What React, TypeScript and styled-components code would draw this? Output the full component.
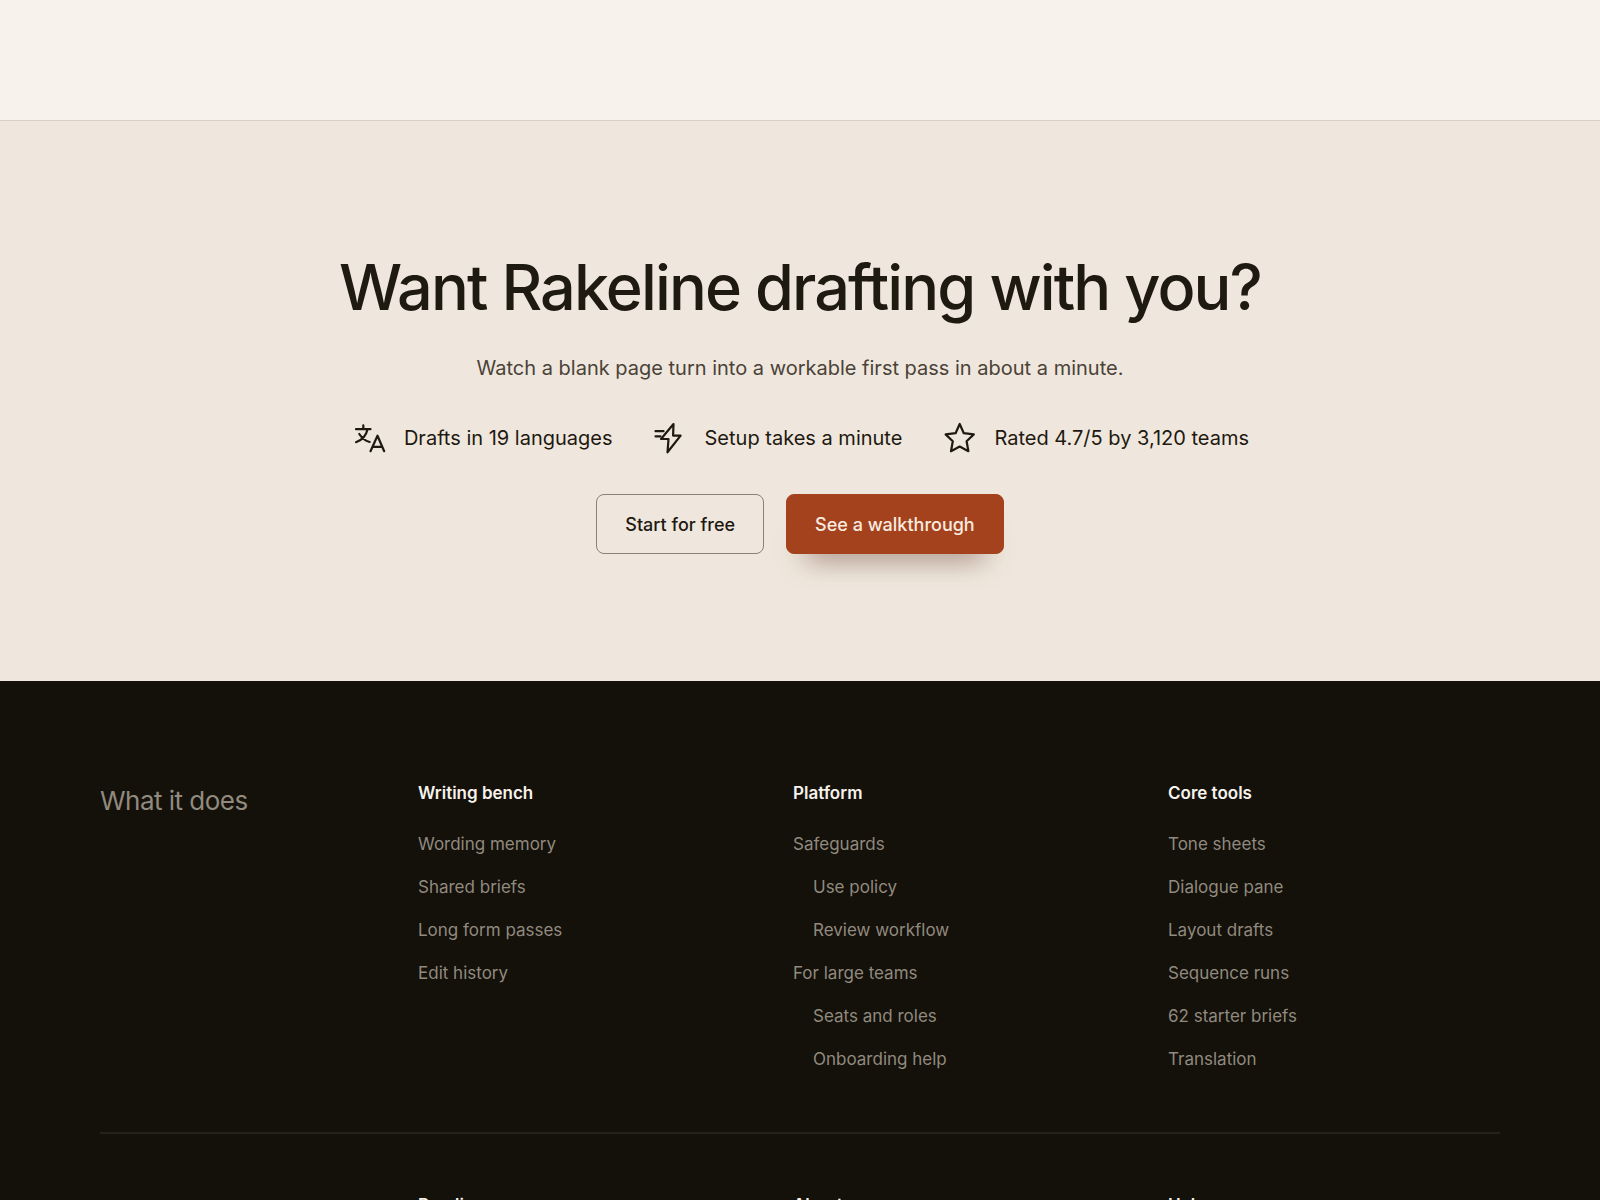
import React from "react";
import styled, { createGlobalStyle } from "styled-components";

const GlobalStyle = createGlobalStyle`
  *, *::before, *::after { box-sizing: border-box; }
  html { background: #14100a; }
  body {
    margin: 0;
    font-family: Inter, "Liberation Sans", sans-serif;
    color: #1e1911;
    -webkit-font-smoothing: antialiased;
  }
  h2, h3, p, ul { margin: 0; padding: 0; }
  ul { list-style: none; }
  a { color: inherit; text-decoration: none; }
`;

const Intro = styled.div`
  height: 121px;
  background: #f7f2eb;
  border-bottom: 1px solid #d8d1c3;
`;

const Callout = styled.section`
  display: flex;
  flex-direction: column;
  align-items: center;
  padding: 128px 24px 127px;
  background: #efe7dd;
  text-align: center;
`;

const Headline = styled.h2`
  font-size: 63px;
  line-height: 76px;
  font-weight: 500;
  letter-spacing: -0.03em;
`;

const Lead = styled.p`
  margin-top: 27px;
  font-size: 20px;
  line-height: 32px;
  color: #4a4237;
`;

const Perks = styled.ul`
  display: flex;
  flex-wrap: wrap;
  justify-content: center;
  gap: 16px 39px;
  margin-top: 36px;
`;

const Perk = styled.li`
  display: flex;
  align-items: center;
  gap: 17px;
  font-size: 20px;
  line-height: 32px;

  svg {
    width: 36px;
    height: 36px;
    flex: none;
  }
`;

const Actions = styled.div`
  display: flex;
  flex-wrap: wrap;
  justify-content: center;
  gap: 22px;
  margin-top: 38px;
`;

const Button = styled.button<{ $primary?: boolean }>`
  height: 60px;
  padding: 0 28px;
  border: 1px solid ${(p) => (p.$primary ? "#a4421d" : "#8a8177")};
  border-radius: 8px;
  background: ${(p) => (p.$primary ? "#a4421d" : "transparent")};
  color: ${(p) => (p.$primary ? "#f9ebe0" : "#1e1911")};
  box-shadow: ${(p) => (p.$primary ? "0 24px 28px -20px rgba(80, 32, 20, 0.55)" : "none")};
  font-family: inherit;
  font-size: 18px;
  font-weight: 500;
  cursor: pointer;
`;

const Footer = styled.footer`
  padding: 100px 100px 0;
  background: #14100a;
  color: #918a7e;
`;

const Group = styled.div`
  display: grid;
  grid-template-columns: 275px repeat(3, 1fr);
  column-gap: 43px;
  padding-bottom: 61px;

  & + & {
    padding-top: 59px;
    border-top: 2px solid #25211b;
  }
`;

const GroupTitle = styled.h2`
  font-size: 26px;
  line-height: 40px;
  font-weight: 400;
  letter-spacing: -0.02em;
`;

const ColumnTitle = styled.h3`
  font-size: 17px;
  line-height: 24px;
  font-weight: 600;
  color: #f7f2eb;
`;

const Links = styled.ul`
  display: grid;
  gap: 19px;
  margin-top: 27px;
  font-size: 17px;
  line-height: 24px;
`;

const LinkItem = styled.li<{ $nested?: boolean }>`
  padding-left: ${(p) => (p.$nested ? 20 : 0)}px;
`;

function TranslateIcon() {
  return (
    <svg viewBox="0 0 36 36" fill="none" stroke="currentColor" strokeWidth="2.2" strokeLinecap="round" strokeLinejoin="round" aria-hidden="true">
      <path d="M5 9.200h14.500M12.300 5.300v3.900M16.500 9.200c-1.200 6-5.500 10.800-11.500 13M8.300 14c2.300 3.800 5.800 6.700 10.400 8" />
      <path d="M19.500 31.200l7-15.500 6.700 15.500M21.700 26.800h9.300" />
    </svg>
  );
}

function BoltIcon() {
  return (
    <svg viewBox="0 0 36 36" fill="none" stroke="currentColor" strokeWidth="2.2" strokeLinecap="round" strokeLinejoin="round" aria-hidden="true">
      <path d="M21.500 4 9 19h7.500L15.500 32.300 28.600 15.600h-7.500z" />
      <path d="M3.500 11.200h8M3.500 16.300h5" />
    </svg>
  );
}

function StarIcon() {
  return (
    <svg viewBox="0 0 36 36" fill="none" stroke="currentColor" strokeWidth="2.2" strokeLinecap="round" strokeLinejoin="round" aria-hidden="true">
      <path d="M18.700 4l4.100 9.200 10 1.200-7.200 6.900 1.800 9.900-8.700-4.700-8.700 4.700 1.800-9.900-7.200-6.900 10-1.200z" />
    </svg>
  );
}

type Entry = { label: string; nested?: boolean };
type ColumnData = { title: string; links: Entry[] };

const productColumns: ColumnData[] = [
  {
    title: "Writing bench",
    links: [{ label: "Wording memory" }, { label: "Shared briefs" }, { label: "Long form passes" }, { label: "Edit history" }],
  },
  {
    title: "Platform",
    links: [
      { label: "Safeguards" },
      { label: "Use policy", nested: true },
      { label: "Review workflow", nested: true },
      { label: "For large teams" },
      { label: "Seats and roles", nested: true },
      { label: "Onboarding help", nested: true },
    ],
  },
  {
    title: "Core tools",
    links: [
      { label: "Tone sheets" },
      { label: "Dialogue pane" },
      { label: "Layout drafts" },
      { label: "Sequence runs" },
      { label: "62 starter briefs" },
      { label: "Translation" },
    ],
  },
];

const companyColumns: ColumnData[] = [
  { title: "Reading", links: [] },
  { title: "About", links: [] },
  { title: "Help", links: [] },
];

function Column({ title, links }: ColumnData) {
  return (
    <div>
      <ColumnTitle>{title}</ColumnTitle>
      {links.length > 0 && (
        <Links>
          {links.map((link) => (
            <LinkItem key={link.label} $nested={link.nested}>
              <a href="#">{link.label}</a>
            </LinkItem>
          ))}
        </Links>
      )}
    </div>
  );
}

export default function App() {
  return (
    <>
      <GlobalStyle />
      <main>
        <Intro />
        <Callout>
          <Headline>Want Rakeline drafting with you?</Headline>
          <Lead>Watch a blank page turn into a workable first pass in about a minute.</Lead>
          <Perks>
            <Perk><TranslateIcon />Drafts in 19 languages</Perk>
            <Perk><BoltIcon />Setup takes a minute</Perk>
            <Perk><StarIcon />Rated 4.7/5 by 3,120 teams</Perk>
          </Perks>
          <Actions>
            <Button type="button">Start for free</Button>
            <Button type="button" $primary>See a walkthrough</Button>
          </Actions>
        </Callout>
      </main>
      <Footer>
        <Group>
          <GroupTitle>What it does</GroupTitle>
          {productColumns.map((column) => <Column key={column.title} {...column} />)}
        </Group>
        <Group>
          <div />
          {companyColumns.map((column) => <Column key={column.title} {...column} />)}
        </Group>
      </Footer>
    </>
  );
}
